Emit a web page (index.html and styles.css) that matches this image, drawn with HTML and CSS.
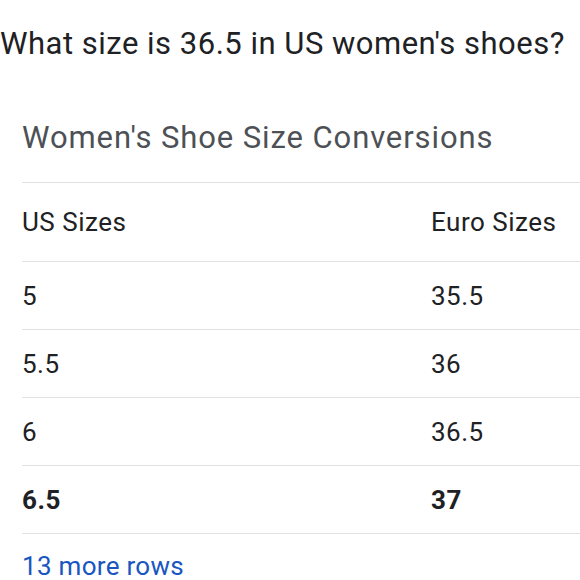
FILE: index.html
```html
<!DOCTYPE html>
<html lang="en">
<head>
    <meta charset="UTF-8">
    <meta name="viewport" content="width=device-width, initial-scale=1.0">
    <title>Shoe Size Conversions</title>
    <link rel="stylesheet" href="styles.css">
</head>
<body>
    <h1 class="question">What size is 36.5 in US women's shoes?</h1>

    <div class="card">
        <h2 class="card-title">Women's Shoe Size Conversions</h2>
        <div class="row head">
            <span>US Sizes</span>
            <span>Euro Sizes</span>
        </div>
        <div class="row">
            <span>5</span>
            <span>35.5</span>
        </div>
        <div class="row">
            <span>5.5</span>
            <span>36</span>
        </div>
        <div class="row">
            <span>6</span>
            <span>36.5</span>
        </div>
        <div class="row picked">
            <span>6.5</span>
            <span>37</span>
        </div>
        <a class="more" href="#">13 more rows</a>
    </div>
</body>
</html>
```

FILE: styles.css
```css
body {
    margin: 0;
    background: #fff;
    font-family: Roboto, "Liberation Sans", sans-serif;
    color: #202124;
}
.question {
    margin: 24px 0 0 0;
    font-size: 31px;
    line-height: 40px;
    font-weight: 400;
    letter-spacing: 0.5px;
    white-space: nowrap;
}
.card {
    margin-top: 54px;
    padding-left: 22px;
}
.card-title {
    margin: 0;
    padding-bottom: 24px;
    font-size: 31px;
    line-height: 40px;
    font-weight: 400;
    letter-spacing: 0.9px;
    color: #4d5156;
    border-bottom: 1px solid #dfe1e5;
}
.row {
    display: grid;
    grid-template-columns: 409px 1fr;
    align-items: center;
    box-sizing: border-box;
    height: 68px;
    font-size: 26px;
    line-height: 30px;
    letter-spacing: 0.5px;
    border-bottom: 1px solid #dfe1e5;
}
.row.head {
    height: 79px;
}
.row.picked {
    font-weight: 700;
}
.more {
    display: block;
    margin-top: 20px;
    font-size: 26px;
    line-height: 24px;
    letter-spacing: 0.3px;
    color: #1a56c0;
    text-decoration: none;
}
```
